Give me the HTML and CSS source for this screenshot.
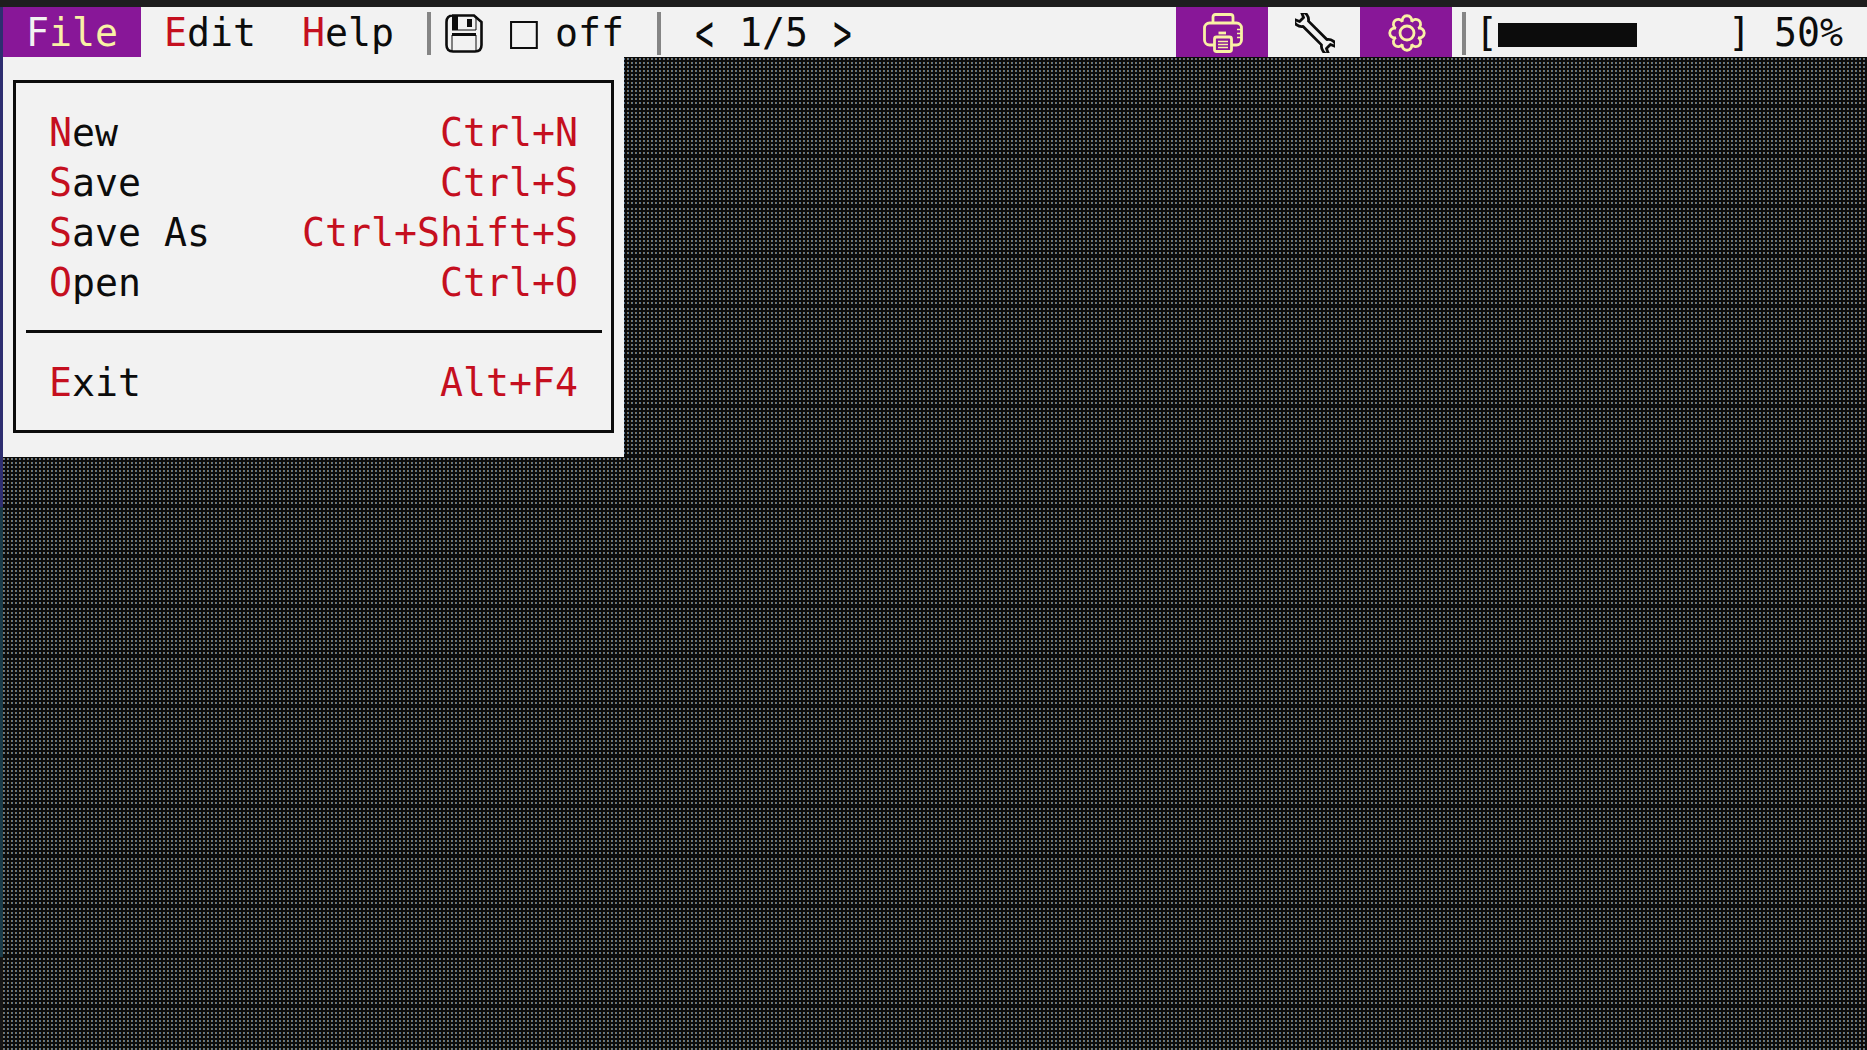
FILE: index.html
```html
<!DOCTYPE html>
<html lang="en">
<head>
    <meta charset="UTF-8">
    <meta name="viewport" content="width=device-width, initial-scale=1.0">
    <title>Terminal Menu Demo</title>
    <link rel="stylesheet" href="styles.css">
</head>
<body>

<div class="titlebar"></div>

<div class="window">
    <div class="edge"></div>

    <div class="term">
        <div class="menubar">
            <span class="item active"><span class="key">F</span>ile</span>
            <span class="item"><span class="key">E</span>dit</span>
            <span class="item"><span class="key">H</span>elp</span>
            <span class="sep"></span>
            <span class="icon-cell">
                <svg width="38" height="39" viewBox="0 0 38 39">
                    <path class="line-dark" d="M7 1.5H29L36.5 8V31Q36.5 37.5 30 37.5H8Q1.5 37.5 1.5 31V8Q1.5 1.5 8 1.5Z"/>
                    <path class="fill-dark" d="M7 2H13V16H7ZM22 5H27V13H22ZM7 19H31V22H7Z"/>
                    <path class="line-thin" d="M7 16H31V2M7 21V37M31 21V37"/>
                </svg>
            </span>
            <span class="check">☐</span>
            <span class="off">off</span>
            <span class="sep"></span>
            <span class="pager"><span class="chevron">&lt;</span></span>
            <span class="page">1/5</span>
            <span class="pager"><span class="chevron">&gt;</span></span>

            <span class="tool purple">
                <svg width="40" height="40" viewBox="0 0 40 40">
                    <path class="line-light" d="M10 11V4Q10 1.5 12.5 1.5H27.5Q30 1.5 30 4V11"/>
                    <rect class="line-light" x="1.5" y="10" width="37" height="22" rx="5"/>
                    <rect class="line-light on-purple" x="11.5" y="24" width="17" height="14.5" rx="2"/>
                    <path class="line-light" d="M15.5 20H23"/>
                    <path class="line-fine" d="M15 28.5H25M15 31.5H25M15 34.5H25M34 16.5H38M34 20.5H38M34 24.5H38"/>
                </svg>
            </span>
            <span class="tool">
                <svg width="40" height="40" viewBox="-20 -20 40 40">
                    <path class="wrench" transform="rotate(45)" d="M-13 -3.8H13A8.5 8.5 0 0 1 25 -5.5L19 -2.8V2.8L25 5.5A8.5 8.5 0 0 1 13 3.8H-13A8.5 8.5 0 0 1 -25 5.5L-19 2.8V-2.8L-25 -5.5A8.5 8.5 0 0 1 -13 -3.8Z"/>
                </svg>
            </span>
            <span class="tool purple">
                <svg width="40" height="40" viewBox="-20 -20 40 40">
                    <path class="line-light" d="M-4.6 -11.1A4.8 4.8 0 1 1 4.6 -11.1A4.8 4.8 0 1 1 11.1 -4.6A4.8 4.8 0 1 1 11.1 4.6A4.8 4.8 0 1 1 4.6 11.1A4.8 4.8 0 1 1 -4.6 11.1A4.8 4.8 0 1 1 -11.1 4.6A4.8 4.8 0 1 1 -11.1 -4.6A4.8 4.8 0 1 1 -4.6 -11.1Z"/>
                    <circle class="line-light" r="7"/>
                </svg>
            </span>
            <span class="sep"></span>
            <span class="progress">
                <span class="bracket">[</span>
                <span class="track"><span class="bar"></span></span>
                <span class="bracket">]</span>
            </span>
            <span class="percent">50%</span>
        </div>

        <div class="desktop">
            <div class="menu">
                <div class="menu-box">
                    <div class="row"><span><span class="key">N</span>ew</span><span class="shortcut">Ctrl+N</span></div>
                    <div class="row"><span><span class="key">S</span>ave</span><span class="shortcut">Ctrl+S</span></div>
                    <div class="row"><span><span class="key">S</span>ave As</span><span class="shortcut">Ctrl+Shift+S</span></div>
                    <div class="row"><span><span class="key">O</span>pen</span><span class="shortcut">Ctrl+O</span></div>
                    <div class="divider"></div>
                    <div class="row"><span><span class="key">E</span>xit</span><span class="shortcut">Alt+F4</span></div>
                </div>
            </div>
        </div>
    </div>
</div>

</body>
</html>
```

FILE: styles.css
```css
:root {
    --cell: 23px;
    --row: 50px;
    --paper: #f2f2f2;
    --ink: #0c0c0c;
    --red: #c50f1f;
    --purple: #881798;
    --yellow: #f9f1a5;
}

* {
    box-sizing: border-box;
}

html, body {
    height: 100%;
}

body {
    margin: 0;
    display: flex;
    flex-direction: column;
    overflow: hidden;
    background-color: #1e1e1e;
    color: var(--ink);
    font-family: "DejaVu Sans Mono", "Liberation Mono", monospace;
    font-size: 38.2px;
    line-height: var(--row);
}

.titlebar {
    height: 7px;
    flex: none;
    background-color: #1e1e1e;
}

.window {
    flex: 1;
    display: flex;
    min-height: 0;
}

.edge {
    width: 3px;
    flex: none;
    background: linear-gradient(#2e2e70 0 500px, #1a3a48 500px 950px, #161616 950px);
}

.term {
    flex: 1;
    display: flex;
    flex-direction: column;
    min-width: 0;
}

/* top bar */
.menubar {
    height: var(--row);
    flex: none;
    display: flex;
    padding-right: 24px;
    background-color: var(--paper);
    white-space: pre;
}

.menubar > span {
    padding-top: 1px;
}

.item {
    padding: 0 var(--cell);
}

.item.active {
    background-color: var(--purple);
    color: var(--yellow);
}

.item.active .key {
    color: var(--paper);
}

.key,
.shortcut {
    color: var(--red);
}

.sep {
    width: var(--cell);
    flex: none;
    position: relative;
}

.sep::after {
    content: "";
    position: absolute;
    left: 10px;
    top: 5px;
    bottom: 2px;
    width: 4px;
    background-color: #858585;
}

.menubar > .icon-cell {
    width: calc(var(--cell) * 2);
    flex: none;
    display: flex;
    justify-content: center;
    padding: 7px 0 0 2px;
}

/* the box glyph is bigger than one cell, so it borrows room from the gaps */
.check {
    margin: 0 -9px 0 21px;
    width: 34px;
    font-size: 56px;
    line-height: 44px;
}

.off {
    margin-left: var(--cell);
    width: calc(var(--cell) * 3);
    margin-right: var(--cell);
}

.pager {
    margin-left: var(--cell);
    width: var(--cell);
}

.chevron {
    display: inline-block;
    transform: scale(0.8, 1.35);
}

.page {
    margin-left: var(--cell);
    width: calc(var(--cell) * 3);
}

.menubar > .tool {
    width: calc(var(--cell) * 4);
    flex: none;
    display: flex;
    justify-content: center;
    padding: 6px 0 0 2px;
}

.pager + .tool {
    margin-left: auto;
}

.purple {
    background-color: var(--purple);
}

.progress {
    display: flex;
}

.bracket {
    width: var(--cell);
}

.track {
    width: calc(var(--cell) * 10);
    padding-top: 15px;
}

.bar {
    display: block;
    width: 139px;
    height: 24px;
    background-color: var(--ink);
}

.percent {
    margin-left: var(--cell);
}

/* svg icons */
svg {
    display: block;
    fill: none;
}

.line-dark {
    stroke: var(--ink);
    stroke-width: 2.6;
}

.line-thin {
    stroke: var(--ink);
    stroke-width: 1;
}

.fill-dark {
    fill: var(--ink);
}

.line-light {
    stroke: var(--yellow);
    stroke-width: 2.8;
}

.line-fine {
    stroke: var(--yellow);
    stroke-width: 1.5;
}

.on-purple {
    fill: var(--purple);
}

.wrench {
    fill: var(--paper);
    stroke: var(--ink);
    stroke-width: 2.8;
    stroke-linejoin: round;
}

/* shaded background, 12 dot rows per text row */
.desktop {
    flex: 1;
    position: relative;
    background-color: var(--ink);
    background-image:
        linear-gradient(var(--ink) 0 1px, transparent 1px 3px, var(--ink) 3px 5px, transparent 5px 7px,
            var(--ink) 7px 9px, transparent 9px 11px, var(--ink) 11px 13px, transparent 13px 15px,
            var(--ink) 15px 17px, transparent 17px 19px, var(--ink) 19px 21px, transparent 21px 23px,
            var(--ink) 23px 25px, transparent 25px 27px, var(--ink) 27px 29px, transparent 29px 31px,
            var(--ink) 31px 33px, transparent 33px 35px, var(--ink) 35px 37px, transparent 37px 39px,
            var(--ink) 39px 41px, transparent 41px 43px, var(--ink) 43px 45px, transparent 45px 47px,
            var(--ink) 47px 50px),
        linear-gradient(90deg, #85765c 0 1px, #54718c 1px 2px, transparent 2px);
    background-size: 100% var(--row), 4px 100%;
}

/* file menu */
.menu {
    position: absolute;
    left: 0;
    top: 0;
    width: calc(var(--cell) * 27);
    height: calc(var(--row) * 8);
    padding: 23px 10px 24px;
    background-color: var(--paper);
}

.menu-box {
    height: 100%;
    border: 3px solid var(--ink);
    padding: 24px 33px 0;
}

.row {
    display: flex;
    justify-content: space-between;
    height: var(--row);
    padding-top: 1px;
    white-space: pre;
}

.divider {
    height: var(--row);
    margin: 0 -24px 0 -23px;
    padding-bottom: 1px;
    display: flex;
    align-items: center;
}

.divider::after {
    content: "";
    flex: 1;
    height: 3px;
    background-color: var(--ink);
}
```
